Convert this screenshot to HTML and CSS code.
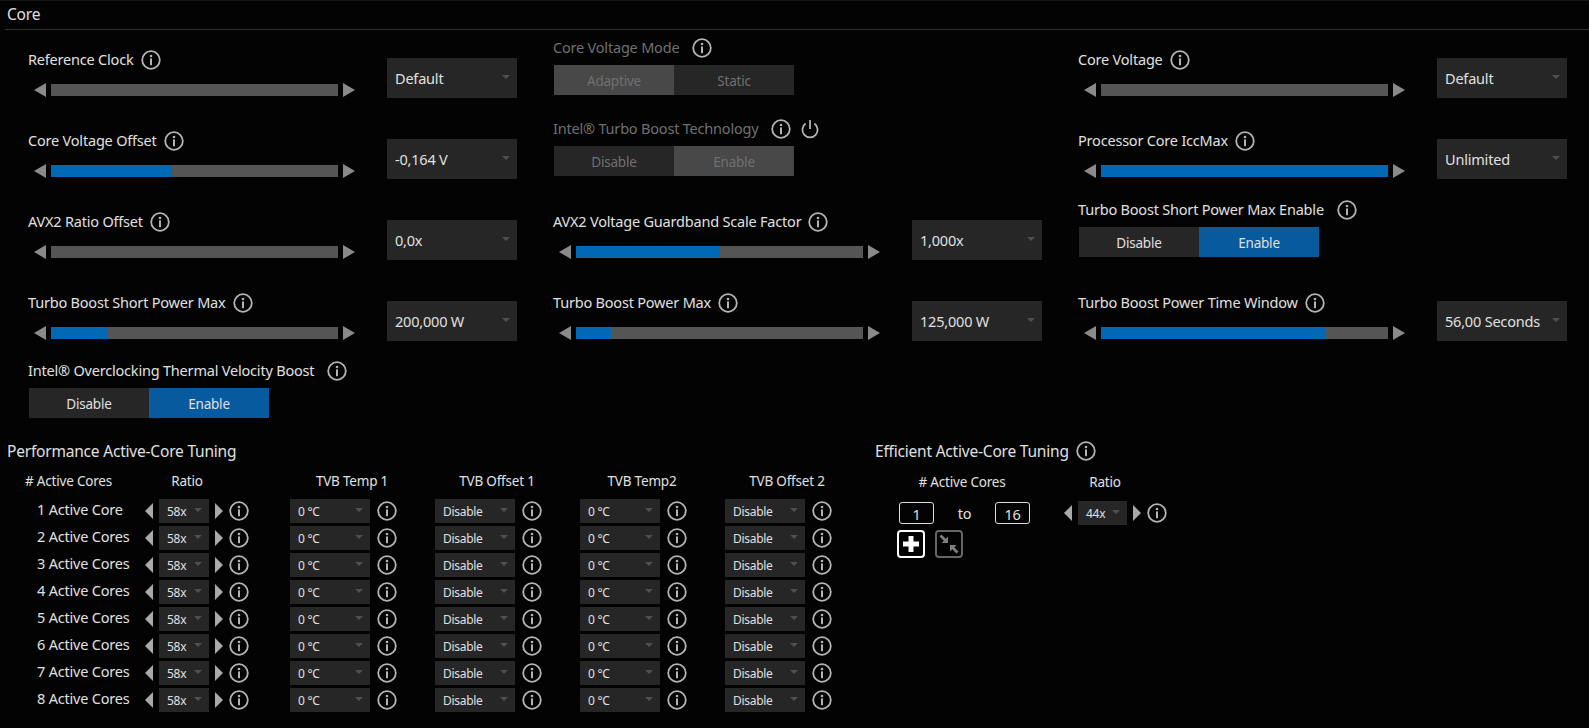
FILE: index.html
```html
<!DOCTYPE html>
<html lang="en">
<head>
    <meta charset="UTF-8">
    <title>Core</title>
    <link rel="stylesheet" href="styles.css">
</head>
<body>
    <svg class="icon-defs" width="0" height="0">
        <symbol id="info" viewBox="0 0 20 20">
            <circle cx="10" cy="10" r="8.8" fill="none" stroke="currentColor" stroke-width="1.8"/>
            <circle cx="10" cy="6" r="1.3" fill="currentColor"/>
            <rect x="9" y="8.4" width="2" height="6.800" fill="currentColor"/>
        </symbol>
    </svg>

    <div class="section-head">Core</div>

    <!-- Sliders and toggles -->
    <div class="settings-grid">
        <div class="setting">
            <div class="setting-main">
                <div class="label">Reference Clock <svg class="info"><use href="#info"/></svg></div>
                <div class="slider"><span class="arrow-left"></span><div class="track"></div><span class="arrow-right"></span></div>
            </div>
            <div class="select">Default</div>
        </div>
        <div class="setting setting-toggle muted">
            <div class="label">Core Voltage Mode <svg class="info wide"><use href="#info"/></svg></div>
            <div class="toggle"><div class="on">Adaptive</div><div>Static</div></div>
        </div>
        <div class="setting">
            <div class="setting-main">
                <div class="label">Core Voltage <svg class="info"><use href="#info"/></svg></div>
                <div class="slider"><span class="arrow-left"></span><div class="track"></div><span class="arrow-right"></span></div>
            </div>
            <div class="select">Default</div>
        </div>

        <div class="setting">
            <div class="setting-main">
                <div class="label">Core Voltage Offset <svg class="info"><use href="#info"/></svg></div>
                <div class="slider"><span class="arrow-left"></span><div class="track"><div class="fill" style="width: 42%"></div></div><span class="arrow-right"></span></div>
            </div>
            <div class="select">-0,164 V</div>
        </div>
        <div class="setting setting-toggle muted">
            <div class="label">Intel® Turbo Boost Technology <svg class="info wide"><use href="#info"/></svg>
                <svg class="power" viewBox="0 0 20 20"><path d="M5.600 4.600a7.600 7.600 0 1 0 8.800 0" fill="none" stroke="currentColor" stroke-width="1.800"/><rect x="9.100" y="1" width="1.800" height="9" fill="currentColor"/></svg>
            </div>
            <div class="toggle"><div>Disable</div><div class="on">Enable</div></div>
        </div>
        <div class="setting">
            <div class="setting-main">
                <div class="label">Processor Core IccMax <svg class="info"><use href="#info"/></svg></div>
                <div class="slider"><span class="arrow-left"></span><div class="track"><div class="fill" style="width: 100%"></div></div><span class="arrow-right"></span></div>
            </div>
            <div class="select">Unlimited</div>
        </div>

        <div class="setting">
            <div class="setting-main">
                <div class="label">AVX2 Ratio Offset <svg class="info"><use href="#info"/></svg></div>
                <div class="slider"><span class="arrow-left"></span><div class="track"></div><span class="arrow-right"></span></div>
            </div>
            <div class="select">0,0x</div>
        </div>
        <div class="setting">
            <div class="setting-main">
                <div class="label">AVX2 Voltage Guardband Scale Factor <svg class="info"><use href="#info"/></svg></div>
                <div class="slider"><span class="arrow-left"></span><div class="track"><div class="fill" style="width: 50%"></div></div><span class="arrow-right"></span></div>
            </div>
            <div class="select">1,000x</div>
        </div>
        <div class="setting setting-toggle">
            <div class="label">Turbo Boost Short Power Max Enable <svg class="info wide"><use href="#info"/></svg></div>
            <div class="toggle"><div>Disable</div><div class="active">Enable</div></div>
        </div>

        <div class="setting">
            <div class="setting-main">
                <div class="label">Turbo Boost Short Power Max <svg class="info"><use href="#info"/></svg></div>
                <div class="slider"><span class="arrow-left"></span><div class="track"><div class="fill" style="width: 20%"></div></div><span class="arrow-right"></span></div>
            </div>
            <div class="select">200,000 W</div>
        </div>
        <div class="setting">
            <div class="setting-main">
                <div class="label">Turbo Boost Power Max <svg class="info"><use href="#info"/></svg></div>
                <div class="slider"><span class="arrow-left"></span><div class="track"><div class="fill" style="width: 12.3%"></div></div><span class="arrow-right"></span></div>
            </div>
            <div class="select">125,000 W</div>
        </div>
        <div class="setting">
            <div class="setting-main">
                <div class="label">Turbo Boost Power Time Window <svg class="info"><use href="#info"/></svg></div>
                <div class="slider"><span class="arrow-left"></span><div class="track"><div class="fill" style="width: 78%"></div></div><span class="arrow-right"></span></div>
            </div>
            <div class="select">56,00 Seconds</div>
        </div>
    </div>

    <div class="setting setting-toggle tvb-boost">
        <div class="label">Intel® Overclocking Thermal Velocity Boost <svg class="info wide"><use href="#info"/></svg></div>
        <div class="toggle"><div>Disable</div><div class="active">Enable</div></div>
    </div>

    <div class="tuning">
        <!-- Performance cores -->
        <div class="tuning-perf">
            <div class="tuning-title">Performance Active-Core Tuning</div>
            <div class="core-table">
                <div class="col-first"># Active Cores</div>
                <div class="col-ratio">Ratio</div>
                <div class="col-head">TVB Temp 1</div>
                <div class="col-head">TVB Offset 1</div>
                <div class="col-head">TVB Temp2</div>
                <div class="col-head">TVB Offset 2</div>

                <div class="core-name">1 Active Core</div>
                <div class="ratio"><span class="step-left"></span><div class="mini-select ratio-select">58x</div><span class="step-right"></span><svg class="info"><use href="#info"/></svg></div>
                <div class="cell"><div class="mini-select">0 °C</div><svg class="info"><use href="#info"/></svg></div>
                <div class="cell"><div class="mini-select">Disable</div><svg class="info"><use href="#info"/></svg></div>
                <div class="cell"><div class="mini-select">0 °C</div><svg class="info"><use href="#info"/></svg></div>
                <div class="cell"><div class="mini-select">Disable</div><svg class="info"><use href="#info"/></svg></div>

                <div class="core-name">2 Active Cores</div>
                <div class="ratio"><span class="step-left"></span><div class="mini-select ratio-select">58x</div><span class="step-right"></span><svg class="info"><use href="#info"/></svg></div>
                <div class="cell"><div class="mini-select">0 °C</div><svg class="info"><use href="#info"/></svg></div>
                <div class="cell"><div class="mini-select">Disable</div><svg class="info"><use href="#info"/></svg></div>
                <div class="cell"><div class="mini-select">0 °C</div><svg class="info"><use href="#info"/></svg></div>
                <div class="cell"><div class="mini-select">Disable</div><svg class="info"><use href="#info"/></svg></div>

                <div class="core-name">3 Active Cores</div>
                <div class="ratio"><span class="step-left"></span><div class="mini-select ratio-select">58x</div><span class="step-right"></span><svg class="info"><use href="#info"/></svg></div>
                <div class="cell"><div class="mini-select">0 °C</div><svg class="info"><use href="#info"/></svg></div>
                <div class="cell"><div class="mini-select">Disable</div><svg class="info"><use href="#info"/></svg></div>
                <div class="cell"><div class="mini-select">0 °C</div><svg class="info"><use href="#info"/></svg></div>
                <div class="cell"><div class="mini-select">Disable</div><svg class="info"><use href="#info"/></svg></div>

                <div class="core-name">4 Active Cores</div>
                <div class="ratio"><span class="step-left"></span><div class="mini-select ratio-select">58x</div><span class="step-right"></span><svg class="info"><use href="#info"/></svg></div>
                <div class="cell"><div class="mini-select">0 °C</div><svg class="info"><use href="#info"/></svg></div>
                <div class="cell"><div class="mini-select">Disable</div><svg class="info"><use href="#info"/></svg></div>
                <div class="cell"><div class="mini-select">0 °C</div><svg class="info"><use href="#info"/></svg></div>
                <div class="cell"><div class="mini-select">Disable</div><svg class="info"><use href="#info"/></svg></div>

                <div class="core-name">5 Active Cores</div>
                <div class="ratio"><span class="step-left"></span><div class="mini-select ratio-select">58x</div><span class="step-right"></span><svg class="info"><use href="#info"/></svg></div>
                <div class="cell"><div class="mini-select">0 °C</div><svg class="info"><use href="#info"/></svg></div>
                <div class="cell"><div class="mini-select">Disable</div><svg class="info"><use href="#info"/></svg></div>
                <div class="cell"><div class="mini-select">0 °C</div><svg class="info"><use href="#info"/></svg></div>
                <div class="cell"><div class="mini-select">Disable</div><svg class="info"><use href="#info"/></svg></div>

                <div class="core-name">6 Active Cores</div>
                <div class="ratio"><span class="step-left"></span><div class="mini-select ratio-select">58x</div><span class="step-right"></span><svg class="info"><use href="#info"/></svg></div>
                <div class="cell"><div class="mini-select">0 °C</div><svg class="info"><use href="#info"/></svg></div>
                <div class="cell"><div class="mini-select">Disable</div><svg class="info"><use href="#info"/></svg></div>
                <div class="cell"><div class="mini-select">0 °C</div><svg class="info"><use href="#info"/></svg></div>
                <div class="cell"><div class="mini-select">Disable</div><svg class="info"><use href="#info"/></svg></div>

                <div class="core-name">7 Active Cores</div>
                <div class="ratio"><span class="step-left"></span><div class="mini-select ratio-select">58x</div><span class="step-right"></span><svg class="info"><use href="#info"/></svg></div>
                <div class="cell"><div class="mini-select">0 °C</div><svg class="info"><use href="#info"/></svg></div>
                <div class="cell"><div class="mini-select">Disable</div><svg class="info"><use href="#info"/></svg></div>
                <div class="cell"><div class="mini-select">0 °C</div><svg class="info"><use href="#info"/></svg></div>
                <div class="cell"><div class="mini-select">Disable</div><svg class="info"><use href="#info"/></svg></div>

                <div class="core-name">8 Active Cores</div>
                <div class="ratio"><span class="step-left"></span><div class="mini-select ratio-select">58x</div><span class="step-right"></span><svg class="info"><use href="#info"/></svg></div>
                <div class="cell"><div class="mini-select">0 °C</div><svg class="info"><use href="#info"/></svg></div>
                <div class="cell"><div class="mini-select">Disable</div><svg class="info"><use href="#info"/></svg></div>
                <div class="cell"><div class="mini-select">0 °C</div><svg class="info"><use href="#info"/></svg></div>
                <div class="cell"><div class="mini-select">Disable</div><svg class="info"><use href="#info"/></svg></div>
            </div>
        </div>

        <!-- Efficient cores -->
        <div class="tuning-eff">
            <div class="tuning-title">Efficient Active-Core Tuning <svg class="info"><use href="#info"/></svg></div>
            <div class="eff-head">
                <div class="eff-head-range"># Active Cores</div>
                <div class="eff-head-ratio">Ratio</div>
            </div>
            <div class="eff-row">
                <div class="num-box">1</div>
                <div class="eff-to">to</div>
                <div class="num-box">16</div>
                <div class="ratio eff-ratio"><span class="step-left"></span><div class="mini-select ratio-select">44x</div><span class="step-right"></span><svg class="info"><use href="#info"/></svg></div>
            </div>
            <div class="eff-buttons">
                <div class="icon-btn">
                    <svg viewBox="0 0 24 24" width="24" height="24"><path d="M9.500 4h5v5.500H20v5h-5.500V20h-5v-5.500H4v-5h5.500z" fill="#fff"/></svg>
                </div>
                <div class="icon-btn icon-btn-off">
                    <svg viewBox="0 0 24 24" width="24" height="24"><path d="M3.500 3.500 9 9M20.500 20.500 15 15" stroke="#808080" stroke-width="2.800" fill="none"/><path d="M11 11V4.500L4.500 11zM13 13v6.500L19.500 13z" fill="#808080"/></svg>
                </div>
            </div>
        </div>
    </div>
</body>
</html>
```

FILE: styles.css
```css
* {
    margin: 0;
    padding: 0;
    box-sizing: border-box;
}

html, body {
    height: 100%;
    overflow: hidden;
}

body {
    background: #030303;
    border-top: 1px solid #141414;
    color: #e0e0e0;
    font-family: "Noto Sans", sans-serif;
    font-size: 14.5px;
    letter-spacing: -0.2px;
}

.icon-defs {
    display: block;
    height: 0;
}

.section-head {
    height: 29px;
    margin-left: 5px;
    padding-left: 2px;
    border-bottom: 1px solid #2e2e2e;
    font-size: 15.5px;
    line-height: 26px;
}

.settings-grid {
    display: grid;
    grid-template-columns: repeat(3, 525px);
    grid-template-rows: 81px 81px 81px 80px;
    margin-top: 20px;
    padding-left: 28px;
}

.setting {
    display: flex;
    position: relative;
}

.setting-main {
    width: 359px;
}

.label {
    display: flex;
    align-items: flex-start;
    gap: 7px;
    height: 20px;
    line-height: 18px;
    white-space: nowrap;
}

.info {
    flex-shrink: 0;
    width: 20px;
    height: 20px;
    color: #b4b4b4;
}

.info.wide {
    margin-left: 6px;
}

.power {
    width: 20px;
    height: 20px;
    margin-left: 2px;
    color: #b4b4b4;
}

/* slider */
.slider {
    display: flex;
    align-items: center;
    gap: 5px;
    height: 14px;
    margin: 13px 0 0 6px;
}

.track {
    width: 287px;
    height: 12px;
    background: #555;
}

.fill {
    height: 100%;
    background: #0068b5;
}

.arrow-left,
.arrow-right {
    width: 12px;
    height: 14px;
    background: #8a8a8a;
}

.arrow-left { clip-path: polygon(100% 0, 100% 100%, 0 50%); }
.arrow-right { clip-path: polygon(0 0, 100% 50%, 0 100%); }

/* select */
.select {
    position: relative;
    width: 130px;
    height: 40px;
    margin-top: 8px;
    padding-left: 8px;
    background: #262626;
    line-height: 41px;
    white-space: nowrap;
}

.select::after,
.mini-select::after {
    content: "";
    position: absolute;
    top: 50%;
    right: 7px;
    margin-top: -3px;
    border-left: 4px solid transparent;
    border-right: 4px solid transparent;
    border-top: 4px solid #4f4f4f;
}

/* toggle */
.setting-toggle {
    flex-direction: column;
    margin-top: -12px;
}

.toggle {
    display: flex;
    width: 240px;
    height: 30px;
    margin: 7px 0 0 1px;
    font-size: 13.5px;
}

.toggle div {
    width: 120px;
    background: #262626;
    line-height: 32px;
    text-align: center;
}

.toggle .active {
    background: #075a9e;
}

.muted .label,
.muted .toggle {
    color: #707070;
}

.muted .toggle .on {
    background: #484848;
}

.tvb-boost {
    margin: -12px 0 0 28px;
}

/* active core tuning */
.tuning {
    display: flex;
    margin-top: 23px;
    padding-left: 7px;
}

.tuning-perf {
    width: 868px;
}

.tuning-title {
    display: flex;
    align-items: center;
    gap: 7px;
    height: 20px;
    font-size: 15.5px;
    line-height: 20px;
    white-space: nowrap;
}

.core-table {
    display: grid;
    grid-template-columns: 120px repeat(5, 145px);
    grid-template-rows: 25px repeat(8, 24px);
    row-gap: 3px;
    margin: 10px 0 0 18px;
    font-size: 13.5px;
}

.col-first {
    line-height: 20px;
}

.col-ratio {
    width: 84px;
    line-height: 20px;
    text-align: center;
}

.col-head {
    width: 124px;
    line-height: 20px;
    text-align: center;
}

.core-name {
    padding-left: 12px;
    font-size: 14.5px;
    line-height: 20px;
    white-space: nowrap;
}

.ratio,
.cell {
    display: flex;
    align-items: center;
}

.cell {
    gap: 7px;
}

.ratio {
    gap: 6px;
}

.mini-select {
    position: relative;
    width: 80px;
    height: 24px;
    padding-left: 8px;
    background: #262626;
    font-size: 12px;
    letter-spacing: -0.3px;
    line-height: 26px;
}

.ratio-select {
    width: 50px;
}

.eff-ratio .ratio-select {
    width: 49px;
}

.step-left,
.step-right {
    width: 8px;
    height: 16px;
    background: #a9a9a9;
}

.step-left { clip-path: polygon(100% 0, 100% 100%, 0 50%); }
.step-right { clip-path: polygon(0 0, 100% 50%, 0 100%); }

.tuning-eff {
    width: 400px;
}

.eff-head {
    display: flex;
    margin-top: 11px;
    font-size: 13.5px;
    line-height: 20px;
}

.eff-head-range {
    width: 174px;
    text-align: center;
}

.eff-head-ratio {
    width: 112px;
    text-align: center;
}

.eff-row {
    display: flex;
    align-items: center;
    height: 24px;
    margin-top: 9px;
    padding-left: 24px;
}

.num-box {
    width: 35px;
    height: 22px;
    border: 1px solid #ddd;
    border-radius: 3px;
    line-height: 22px;
    text-align: center;
}

.eff-to {
    width: 61px;
    line-height: 26px;
    text-align: center;
}

.eff-ratio {
    margin-left: 34px;
}

.eff-buttons {
    display: flex;
    gap: 10px;
    margin: 5px 0 0 22px;
}

.icon-btn {
    width: 28px;
    height: 28px;
    border: 2px solid #fff;
    border-radius: 4px;
}

.icon-btn svg {
    display: block;
    margin: 0;
}

.icon-btn-off {
    border-color: #666;
}
```
